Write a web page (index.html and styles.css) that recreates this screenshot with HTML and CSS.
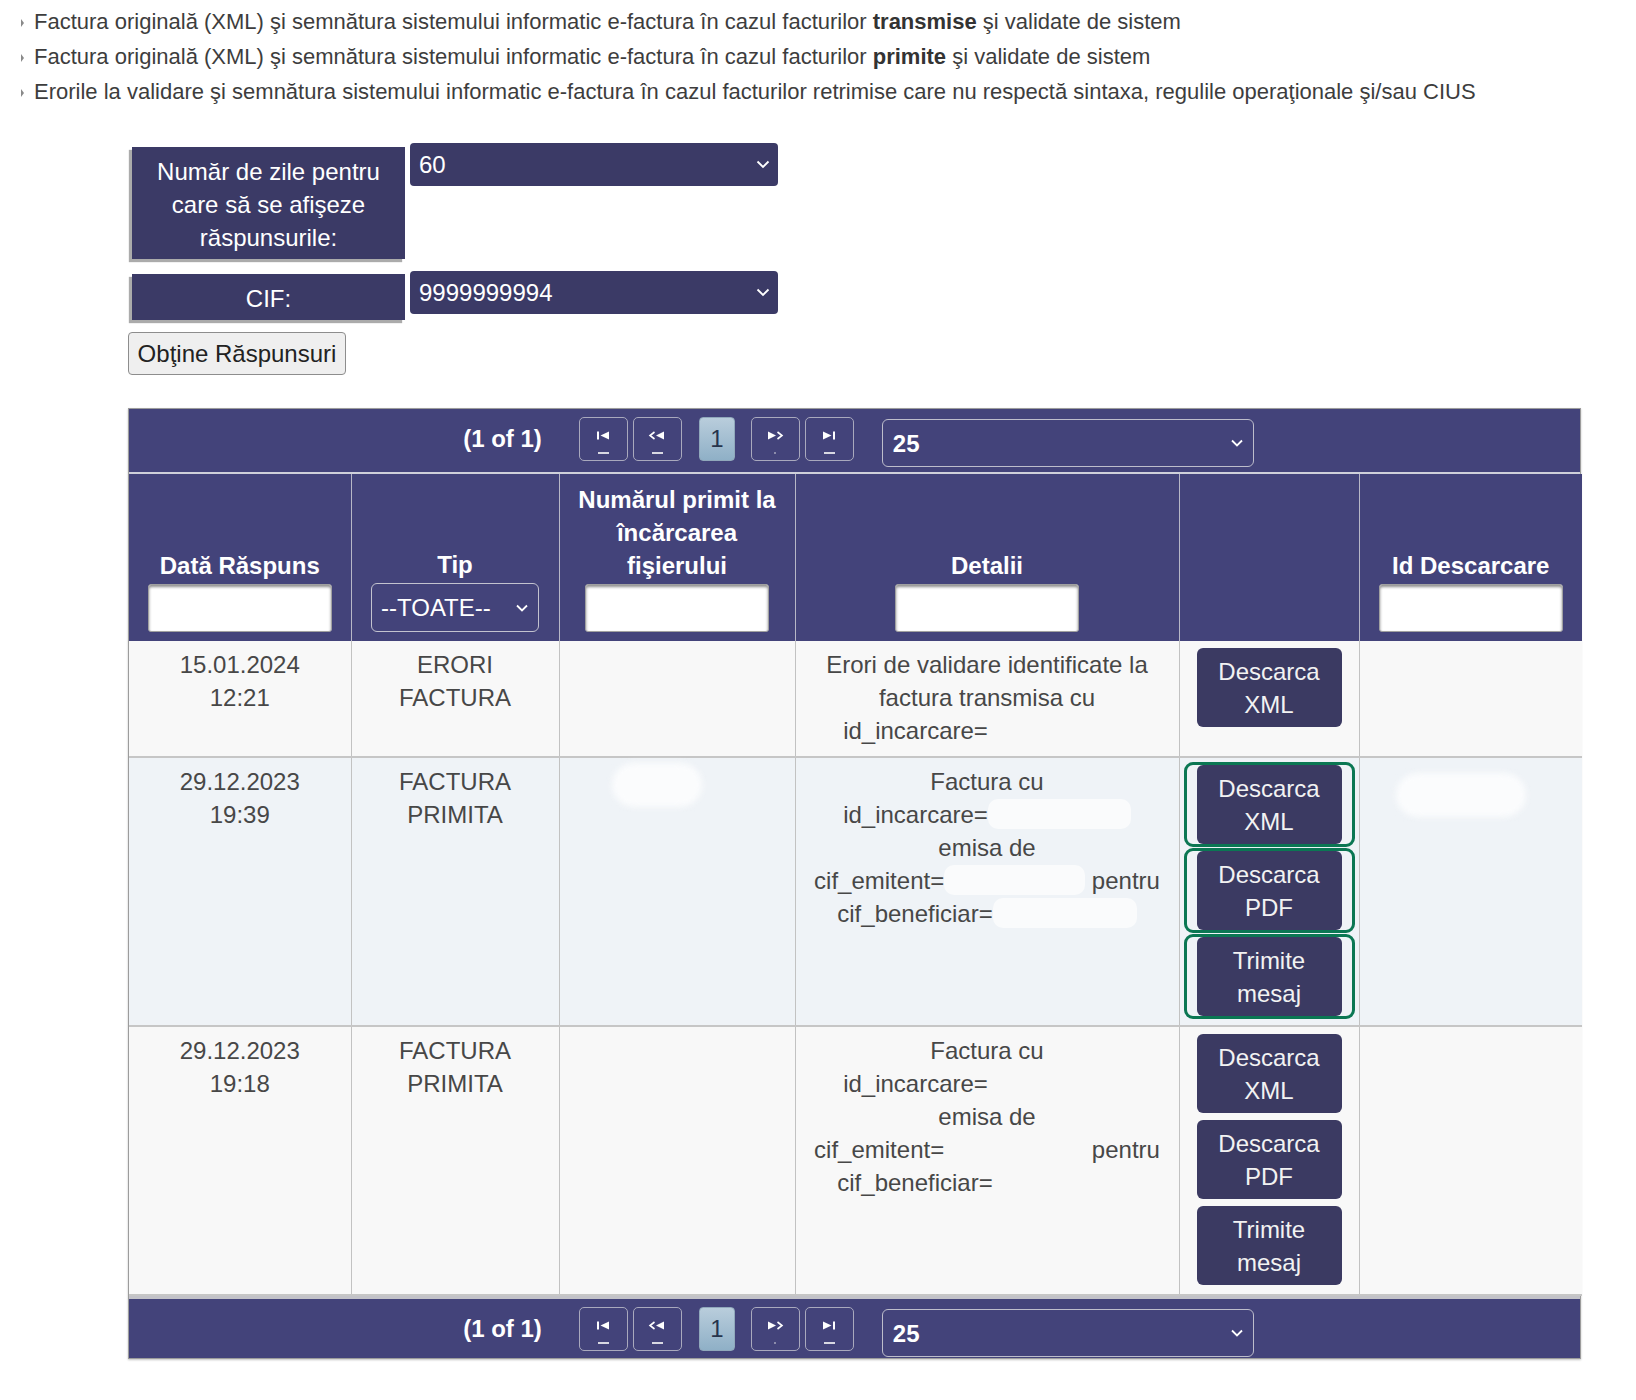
FILE: index.html
```html
<!DOCTYPE html>
<html lang="ro">
<head>
    <meta charset="UTF-8">
    <meta name="viewport" content="width=device-width, initial-scale=1.0">
    <title>Lista mesaje factura electronica</title>
    <link rel="stylesheet" href="styles.css">
</head>
<body>
    <ul class="doc-list">
        <li>Factura originală (XML) şi semnătura sistemului informatic e-factura în cazul facturilor <b>transmise</b> şi validate de sistem</li>
        <li>Factura originală (XML) şi semnătura sistemului informatic e-factura în cazul facturilor <b>primite</b> şi validate de sistem</li>
        <li>Erorile la validare şi semnătura sistemului informatic e-factura în cazul facturilor retrimise care nu respectă sintaxa, regulile operaţionale şi/sau CIUS</li>
    </ul>

    <form class="filter-form" onsubmit="return false;">
        <div class="filters">
            <div class="filter-label tall">Număr de zile pentru<br>care să se afişeze<br>răspunsurile:</div>
            <div class="select-box">
                <select><option>60</option><option>30</option><option>10</option></select>
                <svg class="chev" width="14" height="9" viewBox="0 0 14 9"><path d="M1.5 1.5 L7 7 L12.5 1.5"/></svg>
            </div>
            <div class="filter-label">CIF:</div>
            <div class="select-box">
                <select><option>9999999994</option></select>
                <svg class="chev" width="14" height="9" viewBox="0 0 14 9"><path d="M1.5 1.5 L7 7 L12.5 1.5"/></svg>
            </div>
        </div>
        <button class="btn-get">Obţine Răspunsuri</button>
    </form>

    <div class="datatable">
        <div class="paginator">
            <span class="page-info">(1 of 1)</span>
            <span class="pg-btn">
                <svg width="14" height="9" viewBox="0 0 14 9"><rect x="1" y="0.5" width="2" height="8"/><path d="M13 0.5 L4.5 4.5 L13 8.5Z"/></svg>
                <i class="dash"></i>
            </span>
            <span class="pg-btn">
                <svg width="18" height="9" viewBox="0 0 18 9"><path class="line" d="M6.5 1 L2 4.5 L6.5 8"/><path d="M16 0.5 L8 4.5 L16 8.5Z"/></svg>
                <i class="dash"></i>
            </span>
            <span class="pg-page">1</span>
            <span class="pg-btn">
                <svg width="18" height="9" viewBox="0 0 18 9"><path d="M2 0.5 L10 4.5 L2 8.5Z"/><path class="line" d="M11.5 1 L16 4.5 L11.5 8"/></svg>
                <i class="dot"></i>
            </span>
            <span class="pg-btn">
                <svg width="14" height="9" viewBox="0 0 14 9"><path d="M1 0.5 L9.5 4.5 L1 8.5Z"/><rect x="11" y="0.5" width="2" height="8"/></svg>
                <i class="dash"></i>
            </span>
            <div class="rows-select">
                <select><option>25</option><option>50</option></select>
                <svg class="chev" width="12" height="8" viewBox="0 0 12 8"><path d="M1 1.5 L6 6.5 L11 1.5"/></svg>
            </div>
        </div>

        <table class="grid">
            <colgroup>
                <col class="c-date"><col class="c-tip"><col class="c-nr"><col class="c-det"><col class="c-act"><col class="c-id">
            </colgroup>
            <thead>
                <tr>
                    <th><div class="th-title">Dată Răspuns</div><input class="th-filter" type="text"></th>
                    <th>
                        <div class="th-title">Tip</div>
                        <div class="tip-select">
                            <select><option>--TOATE--</option></select>
                            <svg class="chev" width="12" height="8" viewBox="0 0 12 8"><path d="M1 1.5 L6 6.5 L11 1.5"/></svg>
                        </div>
                    </th>
                    <th><div class="th-title">Numărul primit la<br>încărcarea<br>fişierului</div><input class="th-filter" type="text"></th>
                    <th><div class="th-title">Detalii</div><input class="th-filter" type="text"></th>
                    <th></th>
                    <th><div class="th-title">Id Descarcare</div><input class="th-filter" type="text"></th>
                </tr>
            </thead>
            <tbody>
                <tr class="odd">
                    <td>15.01.2024<br>12:21</td>
                    <td>ERORI<br>FACTURA</td>
                    <td></td>
                    <td>Erori de validare identificate la<br>factura transmisa cu<br>id_incarcare=<span class="redact r-id"></span></td>
                    <td>
                        <button class="act-btn">Descarca<br>XML</button>
                    </td>
                    <td></td>
                </tr>
                <tr class="even">
                    <td>29.12.2023<br>19:39</td>
                    <td>FACTURA<br>PRIMITA</td>
                    <td><div class="smudge s-nr"></div></td>
                    <td>Factura cu<br>id_incarcare=<span class="redact r-id"></span><br>emisa de<br>cif_emitent=<span class="redact r-em"></span> pentru<br>cif_beneficiar=<span class="redact r-ben"></span></td>
                    <td>
                        <button class="act-btn marked">Descarca<br>XML</button>
                        <button class="act-btn marked">Descarca<br>PDF</button>
                        <button class="act-btn marked">Trimite<br>mesaj</button>
                    </td>
                    <td><div class="smudge s-id"></div></td>
                </tr>
                <tr class="odd">
                    <td>29.12.2023<br>19:18</td>
                    <td>FACTURA<br>PRIMITA</td>
                    <td></td>
                    <td>Factura cu<br>id_incarcare=<span class="redact r-id"></span><br>emisa de<br>cif_emitent=<span class="redact r-em"></span> pentru<br>cif_beneficiar=<span class="redact r-ben"></span></td>
                    <td>
                        <button class="act-btn">Descarca<br>XML</button>
                        <button class="act-btn">Descarca<br>PDF</button>
                        <button class="act-btn">Trimite<br>mesaj</button>
                    </td>
                    <td></td>
                </tr>
            </tbody>
        </table>

        <div class="paginator bottom">
            <span class="page-info">(1 of 1)</span>
            <span class="pg-btn">
                <svg width="14" height="9" viewBox="0 0 14 9"><rect x="1" y="0.5" width="2" height="8"/><path d="M13 0.5 L4.5 4.5 L13 8.5Z"/></svg>
                <i class="dash"></i>
            </span>
            <span class="pg-btn">
                <svg width="18" height="9" viewBox="0 0 18 9"><path class="line" d="M6.5 1 L2 4.5 L6.5 8"/><path d="M16 0.5 L8 4.5 L16 8.5Z"/></svg>
                <i class="dash"></i>
            </span>
            <span class="pg-page">1</span>
            <span class="pg-btn">
                <svg width="18" height="9" viewBox="0 0 18 9"><path d="M2 0.5 L10 4.5 L2 8.5Z"/><path class="line" d="M11.5 1 L16 4.5 L11.5 8"/></svg>
                <i class="dot"></i>
            </span>
            <span class="pg-btn">
                <svg width="14" height="9" viewBox="0 0 14 9"><path d="M1 0.5 L9.5 4.5 L1 8.5Z"/><rect x="11" y="0.5" width="2" height="8"/></svg>
                <i class="dash"></i>
            </span>
            <div class="rows-select">
                <select><option>25</option><option>50</option></select>
                <svg class="chev" width="12" height="8" viewBox="0 0 12 8"><path d="M1 1.5 L6 6.5 L11 1.5"/></svg>
            </div>
        </div>
    </div>
</body>
</html>
```

FILE: styles.css
```css
body {
    margin: 0;
    font-family: "Liberation Sans", Arial, sans-serif;
    color: #444;
    background: #fff;
}

select {
    appearance: none;
    -webkit-appearance: none;
    flex: 1;
    min-width: 0;
    background: transparent;
    border: 0;
    padding: 0;
    color: #fff;
    font-family: "Liberation Sans", Arial, sans-serif;
    font-size: 24px;
    outline: none;
}

.chev path {
    fill: none;
    stroke: #fff;
    stroke-width: 1.8;
}

/* lista documente */
.doc-list {
    list-style: none;
    margin: 4px 0 0;
    padding: 0 0 0 34px;
    font-size: 22px;
    line-height: 35px;
    color: #3d3d3d;
}

.doc-list li::before {
    content: "";
    display: inline-block;
    width: 0;
    height: 0;
    margin: 0 10px 0 -13px;
    vertical-align: 2px;
    border-left: 3px solid #8a8a8a;
    border-top: 4px solid transparent;
    border-bottom: 4px solid transparent;
}

.doc-list b {
    color: #333;
}

/* filtre */
.filter-form {
    margin: 34px 0 0 128px;
}

.filters {
    display: grid;
    grid-template-columns: 273px 368px;
    column-gap: 5px;
    row-gap: 12px;
    align-items: start;
    margin-left: 4px;
}

.filter-label {
    margin-top: 3px;
    padding: 8px 8px 5px;
    background: #3b3a66;
    color: #fff;
    font-size: 24px;
    line-height: 33px;
    text-align: center;
    box-shadow: -3px 3px 1px #ababab;
}

.filter-label.tall {
    margin-top: 4px;
}

.select-box {
    display: flex;
    align-items: center;
    height: 43px;
    padding: 0 8px 0 9px;
    background: #3b3a66;
    border-radius: 4px;
}

.btn-get {
    display: block;
    margin-top: 12px;
    width: 218px;
    height: 43px;
    padding: 0;
    background: #efefef;
    border: 1px solid #8d8d8d;
    border-radius: 4px;
    color: #222;
    font-family: "Liberation Sans", Arial, sans-serif;
    font-size: 24px;
}

/* tabel raspunsuri */
.datatable {
    width: 1453px;
    margin: 33px 0 40px 128px;
    border: 1px solid #9c9c9c;
    box-sizing: border-box;
    box-shadow: 0 1px 2px #c4c4c4;
}

.paginator {
    display: flex;
    justify-content: center;
    align-items: flex-start;
    height: 65px;
    box-sizing: border-box;
    padding: 8px 0 0 8px;
    background: #43437a;
    border-bottom: 2px solid #cfd0da;
    color: #fff;
    font-size: 24px;
    font-weight: bold;
}

.paginator.bottom {
    height: 62px;
    border-bottom: 0;
    border-top: 3px solid #c2c2c8;
}

.page-info {
    line-height: 44px;
    margin-right: 37px;
}

.pg-btn {
    display: flex;
    flex-direction: column;
    align-items: center;
    width: 49px;
    height: 44px;
    box-sizing: border-box;
    padding-top: 13px;
    margin-right: 5px;
    border: 1.5px solid #a9a9bd;
    border-radius: 5px;
}

.pg-btn svg {
    fill: #fff;
}

.pg-btn svg .line {
    fill: none;
    stroke: #fff;
    stroke-width: 1.6;
}

.pg-btn .dash {
    width: 11px;
    height: 2px;
    margin-top: 12px;
    background: #d8d8e2;
}

.pg-btn .dot {
    width: 2px;
    height: 2px;
    margin-top: 12px;
    background: #8c8cab;
}

.pg-page {
    width: 36px;
    height: 44px;
    box-sizing: border-box;
    margin: 0 16px 0 12px;
    border: 1px solid #90a8bb;
    border-radius: 4px;
    background: linear-gradient(#b9cddc, #8fb0c7);
    color: #26344c;
    font-weight: normal;
    line-height: 42px;
    text-align: center;
}

.pg-page + .pg-btn + .pg-btn {
    margin-right: 28px;
}

.rows-select {
    display: flex;
    align-items: center;
    width: 372px;
    height: 48px;
    box-sizing: border-box;
    margin-top: 2px;
    padding: 0 10px 0 10px;
    border: 1.5px solid #bdbdcb;
    border-radius: 6px;
    background: #43437a;
}

.rows-select select {
    font-weight: bold;
}

.grid {
    width: 100%;
    table-layout: fixed;
    border-collapse: collapse;
}

.c-date { width: 222px; }
.c-tip { width: 208px; }
.c-nr { width: 236px; }
.c-det { width: 384px; }
.c-act { width: 180px; }
.c-id { width: 223px; }

.grid th {
    padding: 9px 10px 9px;
    vertical-align: bottom;
    background: #43437a;
    border-left: 1px solid #b7b7c6;
    color: #fff;
    font-size: 24px;
    font-weight: bold;
    text-align: center;
}

.grid th:first-child,
.grid td:first-child {
    border-left: 0;
}

.th-title {
    line-height: 33px;
}

.th-filter {
    display: block;
    width: 184px;
    height: 48px;
    box-sizing: border-box;
    margin: 2px auto 0;
    border: 1px solid #a0a0a0;
    border-radius: 3px;
    background: #fff;
    box-shadow: inset 0 2px 3px #8d8d8d;
}

.tip-select {
    display: flex;
    align-items: center;
    width: 168px;
    height: 49px;
    box-sizing: border-box;
    margin: 2px auto 0;
    padding: 0 10px 0 9px;
    border: 1.5px solid #c3c3cf;
    border-radius: 6px;
    background: #43437a;
}

.grid td {
    padding: 7px 12px 9px;
    vertical-align: top;
    border-left: 1px solid #c2c2c2;
    border-bottom: 2px solid #c6c6c6;
    color: #474747;
    font-size: 24px;
    line-height: 33px;
    text-align: center;
}

.grid tr.odd td {
    background: #f8f8f8;
}

.grid tr.even td {
    background: #eff3f7;
}

.redact {
    display: inline-block;
    height: 30px;
    vertical-align: -6px;
    border-radius: 10px;
}

.even .redact {
    background: #fafbfc;
}

.r-id { width: 143px; }
.r-em { width: 141px; }
.r-ben { width: 144px; }

.smudge {
    height: 44px;
    border-radius: 22px;
    background: #fbfcfd;
    filter: blur(3px);
}

.s-nr {
    width: 90px;
    margin: -2px 0 0 40px;
}

.s-id {
    width: 130px;
    margin: 8px 0 0 24px;
}

.act-btn {
    position: relative;
    display: block;
    width: 145px;
    margin: 0 auto 7px;
    padding: 7px 0 6px;
    border: 0;
    border-radius: 6px;
    background: #3b3a62;
    color: #f2f2f2;
    font-family: "Liberation Sans", Arial, sans-serif;
    font-size: 24px;
    line-height: 33px;
}

.act-btn:last-child {
    margin-bottom: 0;
}

/* chenare verzi de marcaj */
.act-btn.marked::after {
    content: "";
    position: absolute;
    top: -3px;
    bottom: -3px;
    left: -13px;
    right: -13px;
    border: 3px solid #0b7753;
    border-radius: 9px;
}
```
